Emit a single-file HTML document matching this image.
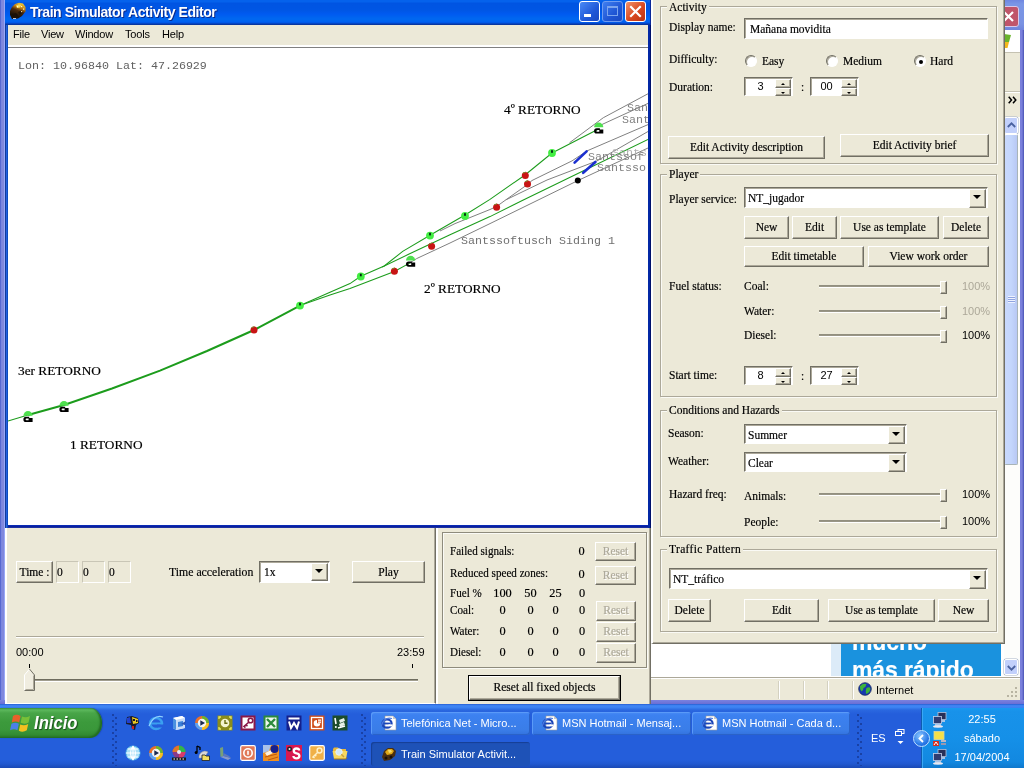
<!DOCTYPE html>
<html><head><meta charset="utf-8">
<style>
*{box-sizing:border-box;margin:0;padding:0}
html,body{width:1024px;height:768px;overflow:hidden;background:#245edb;font-family:"Liberation Serif",serif;font-size:12px;color:#000}
.a{position:absolute}
body>div{will-change:transform}
.t{position:absolute;white-space:nowrap;line-height:14px;font-size:11.5px;-webkit-text-stroke:0.18px}
.cream{background:#ece9d8}
.btn{position:absolute;background:#ece9d8;border:1px solid;border-color:#fff #716f64 #716f64 #fff;box-shadow:inset -1px -1px 0 #aca899;text-align:center;font-size:11.5px;white-space:nowrap;-webkit-text-stroke:0.18px}
.btn span{position:relative;display:block}
.sunk{position:absolute;background:#fff;border:1px solid;border-color:#716f64 #fff #fff #716f64;box-shadow:inset 1px 1px 0 #aca899}
.gb{position:absolute;border:1px solid #aca899;box-shadow:1px 1px 0 rgba(255,255,255,.75), inset 1px 1px 0 rgba(255,255,255,.75)}
.gbl{position:absolute;background:#ece9d8;padding:0 2px;font-size:11.5px;-webkit-text-stroke:0.18px;line-height:14px;white-space:nowrap}
.dis{color:#aca899;text-shadow:1px 1px 0 #fff}
.sans{font-family:"Liberation Sans",sans-serif;-webkit-text-stroke:0}
.mono{font-family:"Liberation Mono",monospace;-webkit-text-stroke:0}

.cbtn{position:absolute;background:#ece9d8;border:1px solid;border-color:#fff #716f64 #716f64 #fff;box-shadow:inset -1px -1px 0 #aca899}
.cbtn:after{content:"";position:absolute;left:3px;top:5px;border:4px solid transparent;border-top:4px solid #000;border-bottom:0}
.sbtn{position:absolute;background:#ece9d8;border:1px solid;border-color:#fff #716f64 #716f64 #fff;box-shadow:inset -1px -1px 0 #aca899}
.sbtn i{position:absolute;left:4.5px;top:2px;border:2.5px solid transparent}
.sbtn i.up{left:4.5px;top:2.5px}.sbtn i.dn{left:4.5px;top:2.5px}
.sbtn i.up{border-bottom:2.5px solid #000;border-top:0}
.sbtn i.dn{border-top:2.5px solid #000;border-bottom:0}
.radio{position:absolute;width:12px;height:12px;border-radius:6px;background:#fff;border:1px solid;border-color:#716f64 #fff #fff #716f64;box-shadow:inset 1px 1px 0 #aca899}
.trk{position:absolute;height:3px;background:linear-gradient(#8e8b7b 0,#9d9a8a 2px,#fff 2px,#fff 3px)}
.thumb{position:absolute;width:7px;height:13px;margin-top:2px;background:#ece9d8;border:1px solid;border-color:#fff #716f64 #716f64 #fff;box-shadow:inset -1px -1px 0 #aca899}
#bm .t{margin-top:-1px}
.t:not(.sans):not(.mono){font-size:12px;transform:scaleX(.958);transform-origin:0 50%}
#bm .t:not(.sans){font-size:12px;transform:scaleX(.925);transform-origin:0 50%}
#bm .t[style*="text-align:center"]{font-size:12.3px;transform:none}

</style></head><body>

<!-- ================= IE window behind ================= -->
<div id="ie" class="a" style="left:0;top:0;width:1024px;height:704px;background:#7a82dc">
  <div class="a" style="left:0;top:0;width:5px;height:704px;background:linear-gradient(90deg,#5868d0 0,#5868d0 1px,#7a86e0 1px,#7a86e0 2px,#8088dc 2px,#8088dc 4px,#98a8f8 4px)"></div>
  <div class="a" style="left:1020px;top:0;width:4px;height:704px;background:linear-gradient(90deg,#7a80dc 0,#7a80dc 2px,#6068c8 3px,#4a54b0 4px)"></div>
  <div class="a" style="left:1000px;top:0;width:24px;height:30px;background:linear-gradient(#6f86e0,#7a96e6 4px,#7a92e2 24px,#6f84dc)"></div>
  <div class="a" style="left:998px;top:6px;width:21px;height:21px;border:1px solid #d8c8e8;border-radius:3px;background:#c0556a"><svg class="a" style="left:3px;top:3px" width="13" height="13" viewBox="0 0 13 13"><path d="M2 2 L11 11 M11 2 L2 11" stroke="#fff" stroke-width="2.2"/></svg></div>
  <!-- throbber -->
  <div class="a" style="left:1000px;top:30px;width:20px;height:22px;background:#fff"></div>
  <svg class="a" style="left:1004px;top:34px" width="8" height="16" viewBox="0 0 8 16"><path d="M0 0 L7 1 L5 8 L0 8 Z" fill="#6ab42c"/><path d="M0 8 L5 8 L3.5 14 L0 14 Z" fill="#f4b81c"/></svg>
  <!-- toolbars -->
  <div class="a cream" style="left:1000px;top:52px;width:20px;height:66px;border-top:1px solid #c5c2b2"></div>
  <div class="a" style="left:1000px;top:91px;width:20px;height:2px;border-top:1px solid #c5c2b2;border-bottom:1px solid #fff"></div>
  <svg class="a" style="left:1008px;top:96px" width="9" height="8" viewBox="0 0 9 8"><path d="M0.7 0.7 L3.5 4 L0.7 7.3 M5 0.7 L7.8 4 L5 7.3" stroke="#000" stroke-width="1.5" fill="none"/></svg>
  <!-- content + scrollbar -->
  <div class="a" style="left:651px;top:118px;width:369px;height:559px;background:#fff"></div>
  <div class="a" style="left:1004px;top:117px;width:16px;height:559px;background:#fdfdfb"></div>
  <div class="a" style="left:1004px;top:117px;width:14px;height:17px;background:#c2d0fb;border:1px solid #fff;border-radius:2px;box-shadow:0 0 0 0.5px #a8b4c8"><svg class="a" style="left:2px;top:4px" width="9" height="6" viewBox="0 0 9 6"><path d="M0.8 5 L4.5 1.3 L8.2 5" stroke="#4a62a0" stroke-width="1.8" fill="none"/></svg></div>
  <div class="a" style="left:1004px;top:134px;width:14px;height:331px;background:linear-gradient(90deg,#c8d8fc,#c4d6fc 50%,#b8c8f4);border:1px solid #fff;border-right-color:#a8b4b8;border-bottom-color:#a8b4b8;border-radius:2px"><div class="a" style="left:3px;top:161px;width:7px;height:7px;background:repeating-linear-gradient(#eef2ff 0,#eef2ff 1px,#8fa4e0 1px,#8fa4e0 2px)"></div></div>
  <div class="a" style="left:1004px;top:659px;width:14px;height:16px;background:#c2d0fb;border:1px solid #fff;border-radius:2px;box-shadow:0 0 0 0.5px #a8b4c8"><svg class="a" style="left:2px;top:5px" width="9" height="6" viewBox="0 0 9 6"><path d="M0.8 1 L4.5 4.7 L8.2 1" stroke="#4a62a0" stroke-width="1.8" fill="none"/></svg></div>
  <!-- ad -->
  <div class="a" style="left:831px;top:640px;width:10px;height:36px;background:#dcebf8"></div><div class="a sans" style="left:841px;top:640px;width:160px;height:36px;background:#1a92de;overflow:hidden;color:#fff;font-weight:bold"><div class="t" style="left:11px;top:-12px;font-size:24px;line-height:28px;letter-spacing:-0.1px">mucho</div><div class="t" style="left:11px;top:16px;font-size:24px;line-height:28px;letter-spacing:-0.1px">más rápido</div></div>
  <!-- status bar -->
  <div class="a cream" style="left:651px;top:677px;width:369px;height:23px;border-top:1px solid #aca899;box-shadow:inset 0 1px 0 #fff"></div>
  <div class="a" style="left:778px;top:681px;width:2px;height:18px;border-left:1px solid #d4d1c0;border-right:1px solid #fff"></div>
  <div class="a" style="left:803px;top:681px;width:2px;height:18px;border-left:1px solid #d4d1c0;border-right:1px solid #fff"></div>
  <div class="a" style="left:827px;top:681px;width:2px;height:18px;border-left:1px solid #d4d1c0;border-right:1px solid #fff"></div>
  <div class="a" style="left:852px;top:681px;width:2px;height:18px;border-left:1px solid #d4d1c0;border-right:1px solid #fff"></div>
  <svg class="a" style="left:858px;top:682px" width="14" height="14" viewBox="0 0 14 14"><circle cx="7" cy="7" r="6.3" fill="#1638b0"/><path d="M2 4 Q5 1 8.5 2 Q8 5 5.5 6 Q5.5 8.5 3.5 9.5 Q1.5 7 2 4 Z M8.5 6 Q11.5 4.5 12.5 6.5 Q12 10.5 8.5 12 Q7 10 8.5 6 Z" fill="#3cb43a"/><circle cx="7" cy="7" r="6.3" fill="none" stroke="#1a2a60" stroke-width="0.8"/></svg>
  <div class="t sans" style="left:876px;top:683px;font-size:11px">Internet</div>
  <svg class="a" style="left:1007px;top:687px" width="12" height="12" viewBox="0 0 12 12" fill="#b8b4a2"><rect x="8" y="0" width="2" height="2"/><rect x="4" y="4" width="2" height="2"/><rect x="8" y="4" width="2" height="2"/><rect x="0" y="8" width="2" height="2"/><rect x="4" y="8" width="2" height="2"/><rect x="8" y="8" width="2" height="2"/></svg>
  <div class="a" style="left:0;top:700px;width:1024px;height:4px;background:linear-gradient(#7a82e0,#6a6ed4)"></div>
</div>

<!-- ================= Taskbar ================= -->
<div id="taskbar" class="a" style="left:0;top:704px;width:1024px;height:64px;background:#245edb;overflow:hidden">
<div class="a" style="left:0;top:0;width:1024px;height:64px;background:linear-gradient(#1f54c8 0,#3c7ff0 1px,#3f86f4 3px,#2a68e0 6px,#245edb 10px,#245edb 56px,#2158cf 60px,#1a49b4 64px)"></div>
<div class="a" style="left:0;top:4px;width:102px;height:30px;border-radius:0 12px 12px 0/0 15px 15px 0;background:linear-gradient(#3b8f3b 0,#5cb85c 2px,#48a548 5px,#3c9a3c 14px,#3a973a 22px,#318a31 27px,#2a7a2a 30px);box-shadow:inset -2px -1px 2px #226a22, 1px 0 1px #1c48a8"></div>
<svg class="a" style="left:10px;top:9px" width="20" height="19" viewBox="-0.5 1 17 16.2"><path d="M2 3.5 Q5 1.5 8.5 3.5 L7.3 9 Q4.5 7.3 1 9 Z" fill="#e8602a"/><path d="M9.7 4 Q13 5.5 16.5 3.5 L15.3 9 Q12 11 8.5 9.4 Z" fill="#78c038"/><path d="M0.7 10.2 Q4 8.5 7 10.2 L5.8 15.7 Q3 14 -0.5 15.7 Z" fill="#4a80e8"/><path d="M8.2 10.7 Q11.5 12.3 15 10.3 L13.8 15.8 Q10.5 17.8 7 16.2 Z" fill="#f4c020"/></svg>
<div class="t sans" style="left:34px;top:8px;font-size:18.5px;line-height:22px;font-weight:bold;font-style:italic;color:#fff;text-shadow:1px 1px 1px #1a4a1a;transform:scaleX(0.9);transform-origin:0 0">Inicio</div>
<div class="a" style="left:112px;top:9px;width:6px;height:53px;background:linear-gradient(#1941a5 2px,transparent 2px) 0 1px/2px 6px repeat-y, linear-gradient(#1941a5 2px,transparent 2px) 3px 4px/2px 6px repeat-y"></div>
<div class="a" style="left:361px;top:9px;width:6px;height:53px;background:linear-gradient(#1941a5 2px,transparent 2px) 0 1px/2px 6px repeat-y, linear-gradient(#1941a5 2px,transparent 2px) 3px 4px/2px 6px repeat-y"></div>
<div class="a" style="left:857px;top:9px;width:6px;height:53px;background:linear-gradient(#1941a5 2px,transparent 2px) 0 1px/2px 6px repeat-y, linear-gradient(#1941a5 2px,transparent 2px) 3px 4px/2px 6px repeat-y"></div>
<svg class="a" style="left:125px;top:11px" width="16" height="16" viewBox="0 0 16 16"><path d="M2 2 L7 1 L13 3 L14 8 L11 10 L10 15 L7 14 L6 10 L1 9 Z" fill="#1a1a28"/><path d="M2 3 L5 2 L6 8 L2 8 Z" fill="#2040d0"/><path d="M7 2 L13 4 L13 8 L8 9 Z" fill="#e8c820"/><rect x="8" y="4" width="2" height="2" fill="#1a1a28"/><rect x="11" y="5" width="1.5" height="2" fill="#1a1a28"/><rect x="7" y="11" width="2" height="3" fill="#c82020"/></svg>
<svg class="a" style="left:148px;top:11px" width="16" height="16" viewBox="0 0 16 16"><ellipse cx="8" cy="8.5" rx="6" ry="5.5" fill="none" stroke="#3aa0f0" stroke-width="2.6"/><rect x="3" y="7.5" width="10" height="2" fill="#3aa0f0"/><rect x="9" y="9.5" width="6" height="3" fill="#245edb"/><path d="M1 11 Q6 -1 15 2" stroke="#8fd0ff" stroke-width="1.3" fill="none"/></svg>
<svg class="a" style="left:171px;top:11px" width="16" height="16" viewBox="0 0 16 16"><path d="M2 3 L11 1 L14 3 L14 13 L5 15 L2 13 Z" fill="#e8f0ff"/><path d="M2 3 L11 1 L14 3 L5 5 Z" fill="#ffffff"/><path d="M2 3 L5 5 L5 15 L2 13 Z" fill="#4a90e0"/><path d="M5 5 L14 3 L14 13 L5 15 Z" fill="#c8dcf8"/><path d="M7 7 L12 6 L12 11 L7 12 Z" fill="#3a80d8"/><path d="M10 9 L15 6 L14 10 Z" fill="#2a50b0"/></svg>
<svg class="a" style="left:194px;top:11px" width="16" height="16" viewBox="0 0 16 16"><circle cx="8" cy="8" r="7" fill="#e8702a"/><path d="M8 1 A7 7 0 0 1 15 8 L8 8 Z" fill="#6ab42c"/><path d="M15 8 A7 7 0 0 1 8 15 L8 8 Z" fill="#f4c020"/><path d="M8 15 A7 7 0 0 1 1 8 L8 8 Z" fill="#5aa0f4"/><circle cx="8" cy="8" r="4.2" fill="#f4f4f4"/><path d="M6.3 5.3 L11 8 L6.3 10.7 Z" fill="#1a2a50"/></svg>
<svg class="a" style="left:217px;top:11px" width="16" height="16" viewBox="0 0 16 16"><rect x="0.5" y="0.5" width="15" height="15" fill="#8a8c1c"/><path d="M2 4 V2 H4 M12 2 H14 V4 M14 12 V14 H12 M4 14 H2 V12" stroke="#e8e860" stroke-width="1.3" fill="none"/><circle cx="8" cy="8" r="4.3" fill="#f4f4d0"/><path d="M8 5 V8.3 H10.5" stroke="#6a6c10" stroke-width="1.4" fill="none"/></svg>
<svg class="a" style="left:240px;top:11px" width="16" height="16" viewBox="0 0 16 16"><rect x="0.5" y="0.5" width="15" height="15" fill="#8a1848"/><rect x="2.5" y="2.5" width="11" height="11" fill="#fff"/><circle cx="10.5" cy="5.5" r="2.3" fill="none" stroke="#8a1848" stroke-width="1.6"/><path d="M9 7 L4 11.5 L5.5 12.5 M6 10 L7.5 11.2" stroke="#8a1848" stroke-width="1.6" fill="none"/></svg>
<svg class="a" style="left:263px;top:11px" width="16" height="16" viewBox="0 0 16 16"><rect x="0.5" y="0.5" width="15" height="15" fill="#2c8a3c"/><rect x="2.5" y="2.5" width="11" height="11" fill="#f0f8f0"/><path d="M4 4 L12 12 M12 4 L4 12" stroke="#2c8a3c" stroke-width="2.4"/></svg>
<svg class="a" style="left:286px;top:11px" width="16" height="16" viewBox="0 0 16 16"><rect x="0.5" y="0.5" width="15" height="15" fill="#14208c"/><rect x="2.5" y="2.5" width="11" height="2" fill="#fff"/><path d="M3 6.5 L5 13 L8 8 L11 13 L13 6.5" stroke="#fff" stroke-width="2" fill="none"/></svg>
<svg class="a" style="left:309px;top:11px" width="16" height="16" viewBox="0 0 16 16"><rect x="0.5" y="0.5" width="15" height="15" fill="#d04c18"/><rect x="2.5" y="2.5" width="11" height="11" fill="none" stroke="#fff" stroke-width="1.3"/><path d="M8 5 A3.3 3.3 0 1 0 11.3 8.3 L8 8.3 Z" fill="#fff"/><rect x="9" y="4.5" width="3" height="1.3" fill="#fff"/><rect x="9" y="6.5" width="3" height="1.3" fill="#fff"/></svg>
<svg class="a" style="left:332px;top:11px" width="16" height="16" viewBox="0 0 16 16"><rect x="0.5" y="0.5" width="15" height="15" fill="#1c4c2c"/><path d="M3 3 L4 9" stroke="#fff" stroke-width="1.6"/><circle cx="3.8" cy="12" r="1" fill="#fff"/><path d="M7 5 L12 3 L13 6 L8 8 Z M7 9 L12 7 L13 10 L8 12 Z" fill="#e8f0e8"/><path d="M6 13 L13 11" stroke="#fff" stroke-width="1.4"/></svg>
<svg class="a" style="left:125px;top:41px" width="16" height="16" viewBox="0 0 16 16"><circle cx="8" cy="8" r="7" fill="#a8e0f8"/><circle cx="8" cy="8" r="7" fill="none" stroke="#58b8e8" stroke-width="1"/><path d="M1 8 H15 M8 1 V15 M2.5 4 H13.5 M2.5 12 H13.5 M8 1 Q3 8 8 15 M8 1 Q13 8 8 15" stroke="#fff" stroke-width="1.1" fill="none"/></svg>
<svg class="a" style="left:148px;top:41px" width="16" height="16" viewBox="0 0 16 16"><circle cx="8" cy="8" r="7" fill="#e8702a"/><path d="M8 1 A7 7 0 0 1 15 8 L8 8 Z" fill="#6ab42c"/><path d="M15 8 A7 7 0 0 1 8 15 L8 8 Z" fill="#f4c020"/><path d="M8 15 A7 7 0 0 1 1 8 L8 8 Z" fill="#5aa0f4"/><circle cx="8" cy="8" r="4.2" fill="#f4f4f4"/><path d="M6.3 5.3 L11 8 L6.3 10.7 Z" fill="#1a2a50"/></svg>
<svg class="a" style="left:171px;top:41px" width="16" height="16" viewBox="0 0 16 16"><circle cx="8" cy="7" r="6.5" fill="#8a3a8a"/><path d="M8 0.5 A6.5 6.5 0 0 1 14.5 7 L8 7 Z" fill="#30b848"/><path d="M1.5 7 A6.5 6.5 0 0 1 8 0.5 L8 7 Z" fill="#e07828"/><path d="M14.5 7 A6.5 6.5 0 0 1 8 13.5 L8 7 Z" fill="#d83a6a"/><circle cx="8" cy="7" r="2" fill="#e8e8f8"/><rect x="1" y="12.5" width="14" height="3" fill="#181818"/><path d="M2.5 14 h1.5 m1.5 0 h1.5 m1.5 0 h1.5 m1.5 0 h1.5" stroke="#fff" stroke-width="1.2"/></svg>
<svg class="a" style="left:194px;top:41px" width="16" height="16" viewBox="0 0 16 16"><path d="M3 1 V7 M3 1 L6 2.5 V5" stroke="#000" stroke-width="1.3" fill="none"/><circle cx="2.2" cy="7.5" r="1.5" fill="#000"/><path d="M5 13 A6 6 0 0 1 14 7 L10 13 Z" fill="#d8d8d8" stroke="#909090" stroke-width="0.5"/><path d="M8 10 H11 L12 11 H15.5 V15.5 H8 Z" fill="#f4e060" stroke="#202020" stroke-width="0.8"/></svg>
<svg class="a" style="left:217px;top:41px" width="16" height="16" viewBox="0 0 16 16"><path d="M3 3 L6 2 L6.5 11 L3.5 12 Z" fill="#78a078"/><path d="M3.5 12 L6.5 11 L14 13 L11 15 Z" fill="#8898c8"/><path d="M6.5 8 L12 11 L14 13 L6.5 11 Z" fill="#6078b8"/></svg>
<svg class="a" style="left:240px;top:41px" width="16" height="16" viewBox="0 0 16 16"><rect x="0.7" y="0.7" width="14.6" height="14.6" rx="1.5" fill="#e07858" stroke="#fff" stroke-width="1.2"/><circle cx="8" cy="8" r="4.2" fill="none" stroke="#fff" stroke-width="1.6"/><rect x="7.2" y="5.8" width="1.6" height="4" fill="#fff"/></svg>
<svg class="a" style="left:263px;top:41px" width="16" height="16" viewBox="0 0 16 16"><rect x="0" y="0" width="16" height="16" fill="#f09020"/><path d="M0 0 H8 L6 6 L0 8 Z" fill="#a8c0e8"/><path d="M2 8 L8 5 L10 8 L4 11 Z" fill="#f8f0e0"/><circle cx="11.5" cy="4" r="4" fill="#18208c"/><path d="M2 12 L14 9 M5 15 L15 12" stroke="#c05810" stroke-width="1"/></svg>
<svg class="a" style="left:286px;top:41px" width="16" height="16" viewBox="0 0 16 16"><rect x="0" y="0" width="16" height="16" fill="#d81850"/><circle cx="3.5" cy="4" r="2.5" fill="#282028"/><circle cx="3.5" cy="4" r="1" fill="#f8e8e8"/><path d="M13.2 5.5 Q13 3.5 10.5 3.5 Q7.8 3.5 7.8 6 Q7.8 7.8 10.5 8.3 Q13.4 8.8 13.4 11 Q13.4 13.3 10.5 13.3 Q7.6 13.3 7.4 11" stroke="#fff" stroke-width="2.3" fill="none"/></svg>
<svg class="a" style="left:309px;top:41px" width="16" height="16" viewBox="0 0 16 16"><rect x="0.7" y="0.7" width="14.6" height="14.6" rx="1.5" fill="#f0b048" stroke="#fff" stroke-width="1.2"/><circle cx="10.5" cy="5.5" r="2.4" fill="none" stroke="#fff0c8" stroke-width="1.5"/><path d="M8.8 7.2 L4 12 L5.6 12.8 M6 10.2 L7.3 11.2" stroke="#fff0c8" stroke-width="1.5" fill="none"/></svg>
<svg class="a" style="left:332px;top:41px" width="16" height="16" viewBox="0 0 16 16"><path d="M1 4 L2 2.5 H6 L7 4 H14 V6 H1 Z" fill="#e8b838"/><path d="M0.5 6 H15.5 L14 14 H2 Z" fill="#f8d860"/><path d="M2 14 L14 14 L14.8 12.5" stroke="#a87818" stroke-width="1" fill="none"/><circle cx="7" cy="7" r="3.2" fill="#d0e8f8" stroke="#e8f0f8" stroke-width="1"/><path d="M9.3 9.3 L12 12" stroke="#c8a040" stroke-width="1.5"/></svg>
<div class="a" style="left:371px;top:8px;width:159px;height:23px;border-radius:3px;background:linear-gradient(#4a8cf6 0,#3c81f0 3px,#3a7de8 18px,#3474e0 22px);box-shadow:inset 1px 1px 0 #5a9af8, inset -1px -1px 0 #2a62c8"><svg class="a" style="left:10px;top:3px" width="16" height="16" viewBox="0 0 16 16"><path d="M4 1 L12 1 L15 4 L15 15 L4 15 Z" fill="#fff" stroke="#9a9a9a" stroke-width="0.6"/><path d="M12 1 L12 4 L15 4 Z" fill="#c8c8c8"/><ellipse cx="6" cy="8.5" rx="4.6" ry="4.2" fill="none" stroke="#1c46b8" stroke-width="2.2"/><rect x="2.5" y="7.6" width="7" height="1.8" fill="#1c46b8"/><rect x="7.5" y="9.4" width="4" height="2" fill="#fff"/><path d="M0.3 11 Q3 1.5 11 3.5" stroke="#4a7ae0" stroke-width="1.2" fill="none"/></svg><div class="t sans" style="left:30px;top:4px;font-size:11px;color:#fff">Telefónica Net - Micro...</div></div>
<div class="a" style="left:532px;top:8px;width:159px;height:23px;border-radius:3px;background:linear-gradient(#4a8cf6 0,#3c81f0 3px,#3a7de8 18px,#3474e0 22px);box-shadow:inset 1px 1px 0 #5a9af8, inset -1px -1px 0 #2a62c8"><svg class="a" style="left:10px;top:3px" width="16" height="16" viewBox="0 0 16 16"><path d="M4 1 L12 1 L15 4 L15 15 L4 15 Z" fill="#fff" stroke="#9a9a9a" stroke-width="0.6"/><path d="M12 1 L12 4 L15 4 Z" fill="#c8c8c8"/><ellipse cx="6" cy="8.5" rx="4.6" ry="4.2" fill="none" stroke="#1c46b8" stroke-width="2.2"/><rect x="2.5" y="7.6" width="7" height="1.8" fill="#1c46b8"/><rect x="7.5" y="9.4" width="4" height="2" fill="#fff"/><path d="M0.3 11 Q3 1.5 11 3.5" stroke="#4a7ae0" stroke-width="1.2" fill="none"/></svg><div class="t sans" style="left:30px;top:4px;font-size:11px;color:#fff">MSN Hotmail - Mensaj...</div></div>
<div class="a" style="left:692px;top:8px;width:158px;height:23px;border-radius:3px;background:linear-gradient(#4a8cf6 0,#3c81f0 3px,#3a7de8 18px,#3474e0 22px);box-shadow:inset 1px 1px 0 #5a9af8, inset -1px -1px 0 #2a62c8"><svg class="a" style="left:10px;top:3px" width="16" height="16" viewBox="0 0 16 16"><path d="M4 1 L12 1 L15 4 L15 15 L4 15 Z" fill="#fff" stroke="#9a9a9a" stroke-width="0.6"/><path d="M12 1 L12 4 L15 4 Z" fill="#c8c8c8"/><ellipse cx="6" cy="8.5" rx="4.6" ry="4.2" fill="none" stroke="#1c46b8" stroke-width="2.2"/><rect x="2.5" y="7.6" width="7" height="1.8" fill="#1c46b8"/><rect x="7.5" y="9.4" width="4" height="2" fill="#fff"/><path d="M0.3 11 Q3 1.5 11 3.5" stroke="#4a7ae0" stroke-width="1.2" fill="none"/></svg><div class="t sans" style="left:30px;top:4px;font-size:11px;color:#fff">MSN Hotmail - Cada d...</div></div>
<div class="a" style="left:371px;top:38px;width:159px;height:24px;border-radius:3px;background:#1e52b7;box-shadow:inset 1px 1px 1px #163f94"><svg class="a" style="left:10px;top:4px" width="16" height="16" viewBox="0 0 16 16"><path d="M1 11 L3 5 L7 2 L12 2 L15 5 L14 10 L9 14 L3 15 Z" fill="#4a2e10"/><path d="M4 6 L7 3 L11 3 L13 5 L11 8 L6 9 Z" fill="#e0a818"/><path d="M7 4 L10 4 L11 6 L8 7 Z" fill="#f6dc6a"/><circle cx="5" cy="12" r="1.5" fill="#1a1008"/><circle cx="10" cy="11" r="1.5" fill="#1a1008"/></svg><div class="t sans" style="left:30px;top:5px;font-size:11px;color:#fff">Train Simulator Activit...</div></div>
<div class="t sans" style="left:871px;top:27px;font-size:11px;color:#fff">ES</div>
<svg class="a" style="left:895px;top:25px" width="10" height="16" viewBox="0 0 10 16"><rect x="3" y="0.5" width="6" height="4" fill="none" stroke="#fff" stroke-width="1"/><rect x="0.5" y="2.5" width="6" height="4" fill="#245edb" stroke="#fff" stroke-width="1"/><path d="M2.5 12 H8.5 L5.5 15 Z" fill="#fff"/></svg>
<div class="a" style="left:921px;top:4px;width:103px;height:60px;background:linear-gradient(#1a9af0 0,#1892ea 3px,#1590e8 30px,#1288e0 54px,#0f78cc 60px);box-shadow:inset 1px 0 0 #0e5cb0, inset 2px 0 0 #3aa8f4"></div>
<div class="a" style="left:913px;top:26px;width:17px;height:17px;border-radius:9px;background:radial-gradient(circle at 6px 5px,#8cc8ff,#2a7ae8 60%,#1a58c8);border:1px solid #bfe0ff"><svg class="a" style="left:3px;top:3px" width="9" height="9" viewBox="0 0 9 9"><path d="M6 1 L2.5 4.5 L6 8" stroke="#fff" stroke-width="1.8" fill="none"/></svg></div>
<svg class="a" style="left:932px;top:8px" width="16" height="16" viewBox="0 0 16 16"><rect x="6" y="0.5" width="8" height="7" fill="#283058" stroke="#b8c0d8" stroke-width="0.8"/><rect x="1.5" y="4.5" width="8" height="7" fill="#303c70" stroke="#c8d0e8" stroke-width="0.8"/><path d="M3 13 H9 M10 9 H13" stroke="#d8d8e8" stroke-width="1.5"/><ellipse cx="6" cy="14.5" rx="5" ry="1.2" fill="#e8e8f0"/></svg>
<svg class="a" style="left:932px;top:27px" width="16" height="16" viewBox="0 0 16 16"><rect x="2" y="0.5" width="10" height="8" fill="#f4e048" stroke="#d8d8a0" stroke-width="0.8"/><rect x="1" y="10" width="6" height="5" fill="#d83020"/><path d="M2 14 L4 11 L6 14" stroke="#fff" stroke-width="1" fill="none"/><rect x="9" y="9" width="5" height="2" fill="#b8b8c8"/><rect x="9" y="12" width="5" height="2" fill="#9898b0"/></svg>
<svg class="a" style="left:932px;top:45px" width="16" height="16" viewBox="0 0 16 16"><rect x="6" y="0.5" width="8" height="7" fill="#283058" stroke="#b8c0d8" stroke-width="0.8"/><rect x="1.5" y="4.5" width="8" height="7" fill="#303c70" stroke="#c8d0e8" stroke-width="0.8"/><path d="M3 13 H9 M10 9 H13" stroke="#d8d8e8" stroke-width="1.5"/><ellipse cx="6" cy="14.5" rx="5" ry="1.2" fill="#e8e8f0"/></svg>
<div class="t sans" style="left:942px;width:80px;text-align:center;top:8px;font-size:11px;color:#fff">22:55</div>
<div class="t sans" style="left:942px;width:80px;text-align:center;top:27px;font-size:11px;color:#fff">sábado</div>
<div class="t sans" style="left:942px;width:80px;text-align:center;top:46px;font-size:11px;color:#fff">17/04/2004</div>
</div>

<!-- ================= Main window ================= -->
<div id="main" class="a" style="left:5px;top:0;width:647px;height:528px;background:linear-gradient(#0a4ae0 0,#0a3ad8 30px,#0831d0 100%)">
  <div class="a" style="left:0;top:525px;width:647px;height:3px;background:linear-gradient(#0a30c0,#081c98 60%,#2a3ea8)"></div>
  <div class="a" style="left:0;top:25px;width:3px;height:503px;background:linear-gradient(90deg,#143c9a 0,#143c9a 1px,#2460e0 1px,#2460e0 2px,#0c4cc0 2px)"></div>
  <div class="a" style="left:643px;top:25px;width:3px;height:503px;background:linear-gradient(90deg,#0328a5 0,#0328a5 2px,#00106a 2px)"></div>
  
  <!-- title bar -->
  <div class="a" style="left:0;top:0;width:647px;height:25px;background:linear-gradient(#0562ec 0,#0562ec 2px,#0054e2 3px,#0056e4 10px,#005af0 14px,#0068f0 19px,#0060f0 22px,#0050e0 23px,#0a3ca8 24px,#06309a 25px)"></div>
  <svg class="a" style="left:4px;top:2px" width="18" height="18" viewBox="0 0 18 18"><defs><linearGradient id="tg" x1="0.7" y1="0" x2="0.3" y2="1"><stop offset="0" stop-color="#f0c838"/><stop offset="0.28" stop-color="#c07c14"/><stop offset="0.48" stop-color="#4e2c0e"/><stop offset="0.8" stop-color="#1c1208"/></linearGradient></defs><path d="M1 9 L3 5 L6 2 L10 0.8 L14 1.5 L16.5 5 L16.5 9.5 L13 14 L9 16.5 L3 17 L1 13 Z" fill="url(#tg)"/><path d="M7 3.5 L10 2.2 L12.5 3 L11 5.5 L8 6 Z" fill="#f4d858"/><path d="M3 12 L7 11 L9 13.5 L5 15.5 Z" fill="#1a1008"/><path d="M9 10 L13 8.5 L13.5 11 L10.5 13 Z" fill="#241608"/><rect x="12" y="4" width="1.2" height="1.2" fill="#fff8d0"/><rect x="14" y="6.5" width="1.2" height="1.2" fill="#fff0c0"/><rect x="8" y="4" width="1.2" height="1.2" fill="#fff8d0"/><rect x="12" y="9" width="1.2" height="1.2" fill="#e8d0a0"/><rect x="4" y="16" width="3" height="1" fill="#c8c0c8"/></svg>
  <div class="t sans" style="left:25px;top:4px;font-size:14px;line-height:17px;letter-spacing:-0.45px;font-weight:bold;color:#fff;text-shadow:1px 1px 0 #0a2a8c">Train Simulator Activity Editor</div>
  <!-- caption buttons -->
  <div class="a" style="left:574px;top:1px;width:21px;height:21px;border:1px solid #fff;border-radius:3px;background:linear-gradient(135deg,#4a8af6,#2058d8 60%,#1a49c2)"><div class="a" style="left:4px;top:12px;width:7px;height:3px;background:#fff"></div></div>
  <div class="a" style="left:597px;top:1px;width:21px;height:21px;border:1px solid #6f9cf0;border-radius:3px;background:linear-gradient(135deg,#3f7ff0,#1f55d4 60%,#1a49c2)"><div class="a" style="left:4px;top:4px;width:11px;height:10px;border:1px solid #7ba4ee;border-top-width:2px"></div></div>
  <div class="a" style="left:620px;top:1px;width:21px;height:21px;border:1px solid #fff;border-radius:3px;background:linear-gradient(135deg,#f0936c,#d9481f 55%,#b93212)"><svg class="a" style="left:3px;top:3px" width="13" height="13" viewBox="0 0 13 13"><path d="M2 2 L11 11 M11 2 L2 11" stroke="#fff" stroke-width="2.2" stroke-linecap="square"/></svg></div>
  <div class="a" style="left:645px;top:0;width:1px;height:25px;background:#0a2898"></div>
  <!-- menu bar -->
  <div class="a cream" style="left:3px;top:25px;width:640px;height:20px"></div>
  <div class="a" style="left:3px;top:45px;width:640px;height:3px;background:#fff"></div>
  <div class="a" style="left:3px;top:47px;width:640px;height:1px;background:#808080"></div>
  <div class="t sans" style="left:8px;top:27px;font-size:11px;letter-spacing:-0.2px">File</div>
  <div class="t sans" style="left:36px;top:27px;font-size:11px;letter-spacing:-0.2px">View</div>
  <div class="t sans" style="left:70px;top:27px;font-size:11px;letter-spacing:-0.2px">Window</div>
  <div class="t sans" style="left:120px;top:27px;font-size:11px;letter-spacing:-0.2px">Tools</div>
  <div class="t sans" style="left:157px;top:27px;font-size:11px;letter-spacing:-0.2px">Help</div>
  <!-- canvas -->
  <div id="cv" class="a" style="left:3px;top:48px;width:640px;height:477px;background:#fff;overflow:hidden">
  <svg class="a" style="left:-8px;top:-48px" width="656" height="528" viewBox="0 0 656 528" fill="none">
    <g stroke="#808080" stroke-width="1">
      <polyline points="569.5,142.75 578,136.5 603.25,117.75 648,93.75"/>
      <polyline points="598.9,125.9 648,103.4"/>
      <polyline points="440,231 455,223.6 490,209.5 496.6,206.5 505.6,200 527.5,184.5 532,180.5 572,160.9 587,150.9 648,124.6"/>
      <polyline points="505.6,200 520,193 547,180 597,160.9 648,131.5"/>
      <polyline points="410.5,262.6 416.4,258.7 450,243 490,223.6 577.8,180.6 648,148"/>
    </g>
    <g stroke="#1c9c1c" stroke-width="1.05">
      <polyline points="8,421 28,415"/>
      <polyline stroke-width="2" points="28,415 64,405 112,388.5 160,370.6 207,351 254,330 300,305.6"/>
      <polyline points="300,305.6 330,292.3 350,283.6 360.7,276.3 384.2,266 402.7,251.4 430,235.3 465,215 490,199.4 525,175 552,153 598.6,129"/>
      <polyline points="382.2,267 408.6,254.3 450,234.8 490,216.6 522.8,200.3 583,171 648,139.4"/>
      <polyline points="300,305.6 330,295 350,288.5 394.4,271.4 410.5,262.6"/>
    </g>

    <defs>
      <g id="mk"><path d="M-4.6 0.2 A4.6 4.6 0 0 1 4.6 0.2 Z" fill="#4fe04f"/><path d="M1.2 1.2 H-2 Q-4.6 1.2 -4.6 3.9 Q-4.6 6.6 -2 6.6 H4.6 V2.4 H0.6 V4.7 H-1.5 Q-2.4 4.7 -2.4 3.9 Q-2.4 3.1 -1.5 3.1 H1.2 Z" fill="#000"/></g>
      <g id="gd"><circle r="3.9" fill="#42ee42"/><rect x="-0.9" y="-2.8" width="1.8" height="2.6" fill="#021"/></g>
      <g id="rd"><circle r="3.5" fill="#c81414"/><path d="M-2.5 -2.3 L0.5 -3.4" stroke="#7a8a30" stroke-width="1"/></g>
    </defs>
    <use href="#mk" x="28" y="415.5"/><use href="#mk" x="64" y="405.5"/><use href="#mk" x="410.6" y="260.2"/><use href="#mk" x="598.7" y="127"/>
    <use href="#gd" x="300" y="305.6"/><use href="#gd" x="360.8" y="276.5"/><use href="#gd" x="430" y="235.6"/><use href="#gd" x="465" y="216"/><use href="#gd" x="552" y="153"/>
    <use href="#rd" x="254" y="330"/><use href="#rd" x="394.4" y="271.3"/><use href="#rd" x="431.6" y="246.3"/><use href="#rd" x="496.6" y="207.2"/><use href="#rd" x="525.3" y="175.5"/><use href="#rd" x="527.5" y="184"/>
    <circle cx="577.8" cy="180.6" r="3" fill="#000"/>
    <path d="M574.6 162.6 L586.6 151.4 M583.2 172.8 L595.4 162" stroke="#1a2fd0" stroke-width="2.6" stroke-linecap="round"/>
  </svg>
  <div class="t" style="left:10px;top:315px;font-size:13.3px;line-height:16px;transform:none">3er RETORNO</div>
  <div class="t" style="left:62px;top:389px;font-size:13.3px;line-height:16px;transform:none">1 RETORNO</div>
  <div class="t" style="left:416px;top:233px;font-size:13.3px;line-height:16px;transform:none">2º RETORNO</div>
  <div class="t" style="left:496px;top:54px;font-size:13.3px;line-height:16px;transform:none">4º RETORNO</div>
  <div class="t mono" style="left:10px;top:11px;font-size:11.67px;color:#606060">Lon: 10.96840 Lat: 47.26929</div>
  <div class="t mono" style="left:453px;top:186px;font-size:11.67px;color:#707070">Santssoftusch Siding 1</div>
  <div class="t mono" style="left:619px;top:53px;font-size:11.67px;color:#808080">San</div>
  <div class="t mono" style="left:614px;top:65px;font-size:11.67px;color:#808080">Sant</div>
  <div class="t mono" style="left:604px;top:98px;font-size:11.67px;color:#b0b0b0">Sants</div>
  <div class="t mono" style="left:580px;top:102px;font-size:11.67px;color:#808080">Santssof</div>
  <div class="t mono" style="left:589px;top:113px;font-size:11.67px;color:#808080">Santsso</div>
  </div>
</div>

<!-- ================= Bottom-left panel ================= -->
<div id="bl" class="a cream" style="left:5px;top:528px;width:431px;height:176px;border-left:2px solid #fff;border-bottom:1px solid #fff;border-right:1px solid #716f64;box-shadow:inset -1px 0 0 #aca899">
<div class="a" style="left:-2px;top:1px;width:431px;height:175px">
<div class="btn " style="left:11px;top:32px;width:37px;height:22px;line-height:20px;">Time :</div>
<div class="a" style="left:51px;top:32px;width:23px;height:22px;border:1px solid;border-color:#c9c6b6 #fff #fff #c9c6b6"><div class="t" style="left:0px;top:3px">0</div></div>
<div class="a" style="left:77px;top:32px;width:23px;height:22px;border:1px solid;border-color:#c9c6b6 #fff #fff #c9c6b6"><div class="t" style="left:0px;top:3px">0</div></div>
<div class="a" style="left:103px;top:32px;width:23px;height:22px;border:1px solid;border-color:#c9c6b6 #fff #fff #c9c6b6"><div class="t" style="left:0px;top:3px">0</div></div>
<div class="t " style="left:164px;top:36px;font-size:12.3px">Time acceleration</div>
<div class="sunk" style="left:254px;top:32px;width:71px;height:22px"><div class="t" style="left:4px;top:3px">1x</div><div class="cbtn" style="right:1px;top:1px;width:17px;height:18px"></div></div>
<div class="btn " style="left:347px;top:32px;width:73px;height:22px;line-height:21px;">Play</div>
<div class="a" style="left:11px;top:107px;width:408px;height:2px;border-top:1px solid #aca899;border-bottom:1px solid #fff"></div>
<div class="t sans" style="left:11px;top:116px;font-size:11px">00:00</div>
<div class="t sans" style="left:392px;top:116px;font-size:11px">23:59</div>
<div class="a" style="left:24px;top:135px;width:1px;height:4px;background:#000"></div>
<div class="a" style="left:407px;top:135px;width:1px;height:4px;background:#000"></div>
<div class="a" style="left:19px;top:150px;width:394px;height:3px;background:linear-gradient(#6e6c5e 0,#6e6c5e 1px,#a09d8e 1px,#a09d8e 2px,#fff 2px,#fff 3px)"></div>
<svg class="a" style="left:18px;top:139px" width="13" height="24" viewBox="0 0 13 24"><path d="M1.5 7 L6.5 1 L11.5 7 L11.5 22.5 L1.5 22.5 Z" fill="#f0ede0"/><path d="M1.5 22.5 L1.5 7 L6.5 1" stroke="#fff" fill="none"/><path d="M6.5 1 L11.5 7 L11.5 22.5 L1.5 22.5" stroke="#716f64" fill="none"/><path d="M10.5 7.5 L10.5 21.5 L2.5 21.5" stroke="#aca899" fill="none"/></svg>
</div></div>

<!-- ================= Bottom-middle panel ================= -->
<div id="bm" class="a cream" style="left:436px;top:528px;width:215px;height:176px;border-left:2px solid #fff;border-right:1px solid #716f64;box-shadow:inset -1px 0 0 #aca899">
<div class="a" style="left:-1px;top:1px;width:214px;height:175px">
<div class="gb" style="left:5px;top:3px;width:205px;height:136px;border-color:#8e8b7c"></div>
<div class="t " style="left:13px;top:16px;">Failed signals:</div>
<div class="t" style="left:124.5px;width:40px;text-align:center;top:16px;">0</div>
<div class="btn dis" style="left:158px;top:13px;width:41px;height:19px;line-height:16px;">Reset</div>
<div class="t " style="left:13px;top:38px;">Reduced speed zones:</div>
<div class="t" style="left:124.5px;width:40px;text-align:center;top:39px;">0</div>
<div class="btn dis" style="left:158px;top:37px;width:41px;height:19px;line-height:16px;">Reset</div>
<div class="t " style="left:13px;top:58px;">Fuel %</div>
<div class="t" style="left:45.5px;width:40px;text-align:center;top:58px;">100</div>
<div class="t" style="left:73.5px;width:40px;text-align:center;top:58px;">50</div>
<div class="t" style="left:98.5px;width:40px;text-align:center;top:58px;">25</div>
<div class="t" style="left:125px;width:40px;text-align:center;top:58px;">0</div>
<div class="t " style="left:13px;top:75px;">Coal:</div>
<div class="t" style="left:45.5px;width:40px;text-align:center;top:75px;">0</div>
<div class="t" style="left:73.5px;width:40px;text-align:center;top:75px;">0</div>
<div class="t" style="left:98.5px;width:40px;text-align:center;top:75px;">0</div>
<div class="t" style="left:125px;width:40px;text-align:center;top:75px;">0</div>
<div class="btn dis" style="left:159px;top:72px;width:40px;height:20px;line-height:17px;">Reset</div>
<div class="t " style="left:13px;top:96px;">Water:</div>
<div class="t" style="left:45.5px;width:40px;text-align:center;top:96px;">0</div>
<div class="t" style="left:73.5px;width:40px;text-align:center;top:96px;">0</div>
<div class="t" style="left:98.5px;width:40px;text-align:center;top:96px;">0</div>
<div class="t" style="left:125px;width:40px;text-align:center;top:96px;">0</div>
<div class="btn dis" style="left:159px;top:93px;width:40px;height:20px;line-height:17px;">Reset</div>
<div class="t " style="left:13px;top:117px;">Diesel:</div>
<div class="t" style="left:45.5px;width:40px;text-align:center;top:117px;">0</div>
<div class="t" style="left:73.5px;width:40px;text-align:center;top:117px;">0</div>
<div class="t" style="left:98.5px;width:40px;text-align:center;top:117px;">0</div>
<div class="t" style="left:125px;width:40px;text-align:center;top:117px;">0</div>
<div class="btn dis" style="left:159px;top:114px;width:40px;height:20px;line-height:17px;">Reset</div>
<div class="a" style="left:31px;top:146px;width:153px;height:26px;border:1px solid #000"><div class="btn" style="left:0;top:0;width:151px;height:24px;line-height:21px">Reset all fixed objects</div></div>
</div></div>

<!-- ================= Right panel ================= -->
<div id="rp" class="a cream" style="left:651px;top:0;width:354px;height:644px;border-left:2px solid #fff;border-right:1px solid #716f64;border-bottom:1px solid #716f64;box-shadow:inset -1px -1px 0 #aca899">
<div class="a" style="left:-2px;top:0;width:353px;height:644px">
<div class="gb" style="left:9px;top:6px;width:337px;height:158px"></div><div class="gbl" style="left:16px;top:0px">Activity</div>
<div class="t" style="left:18px;top:20px;">Display name:</div>
<div class="sunk" style="left:93px;top:18px;width:244px;height:21px"><div class="t" style="left:5px;top:3px">Mañana movidita</div></div>
<div class="t" style="left:18px;top:52px;">Difficulty:</div>
<div class="radio" style="left:94px;top:55px"></div>
<div class="t" style="left:111px;top:54px;">Easy</div>
<div class="radio" style="left:175px;top:55px"></div>
<div class="t" style="left:192px;top:54px;">Medium</div>
<div class="radio" style="left:263px;top:55px"><div class="a" style="left:4px;top:4px;width:4px;height:4px;border-radius:2px;background:#000"></div></div>
<div class="t" style="left:279px;top:54px;">Hard</div>
<div class="t" style="left:18px;top:80px;">Duration:</div>
<div class="sunk" style="left:93px;top:77px;width:49px;height:19px"><div class="t sans" style="left:0;width:31px;text-align:center;top:1px;font-size:11px">3</div><div class="sbtn" style="right:1px;top:1px;width:16px;height:9px"><i class="up"></i></div><div class="sbtn" style="right:1px;top:10px;width:16px;height:8px"><i class="dn"></i></div></div>
<div class="t" style="left:150px;top:80px;">:</div>
<div class="sunk" style="left:159px;top:77px;width:49px;height:19px"><div class="t sans" style="left:0;width:31px;text-align:center;top:1px;font-size:11px">00</div><div class="sbtn" style="right:1px;top:1px;width:16px;height:9px"><i class="up"></i></div><div class="sbtn" style="right:1px;top:10px;width:16px;height:8px"><i class="dn"></i></div></div>
<div class="btn " style="left:17px;top:136px;width:157px;height:23px;line-height:20px">Edit Activity description</div>
<div class="btn " style="left:189px;top:134px;width:149px;height:23px;line-height:20px">Edit Activity brief</div>
<div class="gb" style="left:9px;top:174px;width:337px;height:223px"></div><div class="gbl" style="left:16px;top:167px">Player</div>
<div class="t" style="left:18px;top:192px;">Player service:</div>
<div class="sunk" style="left:93px;top:187px;width:244px;height:21px"><div class="t" style="left:3px;top:3px">NT_jugador</div><div class="cbtn" style="right:1px;top:1px;width:17px;height:19px"></div></div>
<div class="btn " style="left:93px;top:216px;width:45px;height:23px;line-height:21px">New</div>
<div class="btn " style="left:141px;top:216px;width:45px;height:23px;line-height:21px">Edit</div>
<div class="btn " style="left:189px;top:216px;width:99px;height:23px;line-height:21px">Use as template</div>
<div class="btn " style="left:292px;top:216px;width:46px;height:23px;line-height:21px">Delete</div>
<div class="btn " style="left:93px;top:246px;width:120px;height:21px;line-height:18px">Edit timetable</div>
<div class="btn " style="left:217px;top:246px;width:121px;height:21px;line-height:18px">View work order</div>
<div class="t" style="left:18px;top:279px;">Fuel status:</div>
<div class="t" style="left:93px;top:279px;">Coal:</div>
<div class="trk" style="left:168px;top:285px;width:128px"></div><div class="thumb" style="left:289px;top:279px"></div><div class="t sans" style="font-size:11px;left:311px;top:279px;color:#aca899">100%</div>
<div class="t" style="left:93px;top:304px;">Water:</div>
<div class="trk" style="left:168px;top:310px;width:128px"></div><div class="thumb" style="left:289px;top:304px"></div><div class="t sans" style="font-size:11px;left:311px;top:304px;color:#aca899">100%</div>
<div class="t" style="left:93px;top:328px;">Diesel:</div>
<div class="trk" style="left:168px;top:334px;width:128px"></div><div class="thumb" style="left:289px;top:328px"></div><div class="t sans" style="font-size:11px;left:311px;top:328px;">100%</div>
<div class="t" style="left:18px;top:368px;">Start time:</div>
<div class="sunk" style="left:93px;top:366px;width:49px;height:19px"><div class="t sans" style="left:0;width:31px;text-align:center;top:1px;font-size:11px">8</div><div class="sbtn" style="right:1px;top:1px;width:16px;height:9px"><i class="up"></i></div><div class="sbtn" style="right:1px;top:10px;width:16px;height:8px"><i class="dn"></i></div></div>
<div class="t" style="left:150px;top:369px;">:</div>
<div class="sunk" style="left:159px;top:366px;width:49px;height:19px"><div class="t sans" style="left:0;width:31px;text-align:center;top:1px;font-size:11px">27</div><div class="sbtn" style="right:1px;top:1px;width:16px;height:9px"><i class="up"></i></div><div class="sbtn" style="right:1px;top:10px;width:16px;height:8px"><i class="dn"></i></div></div>
<div class="gb" style="left:9px;top:410px;width:337px;height:127px"></div><div class="gbl" style="left:16px;top:403px">Conditions and Hazards</div>
<div class="t" style="left:17px;top:426px;">Season:</div>
<div class="sunk" style="left:93px;top:424px;width:163px;height:20px"><div class="t" style="left:3px;top:3px">Summer</div><div class="cbtn" style="right:1px;top:1px;width:17px;height:18px"></div></div>
<div class="t" style="left:17px;top:454px;">Weather:</div>
<div class="sunk" style="left:93px;top:452px;width:163px;height:20px"><div class="t" style="left:3px;top:3px">Clear</div><div class="cbtn" style="right:1px;top:1px;width:17px;height:18px"></div></div>
<div class="t" style="left:18px;top:487px;">Hazard freq:</div>
<div class="t" style="left:93px;top:489px;">Animals:</div>
<div class="trk" style="left:168px;top:493px;width:128px"></div><div class="thumb" style="left:289px;top:487px"></div><div class="t sans" style="font-size:11px;left:311px;top:487px;">100%</div>
<div class="t" style="left:93px;top:515px;">People:</div>
<div class="trk" style="left:168px;top:520px;width:128px"></div><div class="thumb" style="left:289px;top:514px"></div><div class="t sans" style="font-size:11px;left:311px;top:514px;">100%</div>
<div class="gb" style="left:9px;top:549px;width:337px;height:83px"></div><div class="gbl" style="left:16px;top:542px;letter-spacing:0.35px">Traffic Pattern</div>
<div class="sunk" style="left:18px;top:568px;width:319px;height:21px"><div class="t" style="left:3px;top:3px">NT_tráfico</div><div class="cbtn" style="right:1px;top:1px;width:17px;height:19px"></div></div>
<div class="btn " style="left:17px;top:599px;width:43px;height:23px;line-height:21px">Delete</div>
<div class="btn " style="left:93px;top:599px;width:75px;height:23px;line-height:21px">Edit</div>
<div class="btn " style="left:177px;top:599px;width:107px;height:23px;line-height:21px">Use as template</div>
<div class="btn " style="left:287px;top:599px;width:51px;height:23px;line-height:21px">New</div>
</div></div>

</body></html>
